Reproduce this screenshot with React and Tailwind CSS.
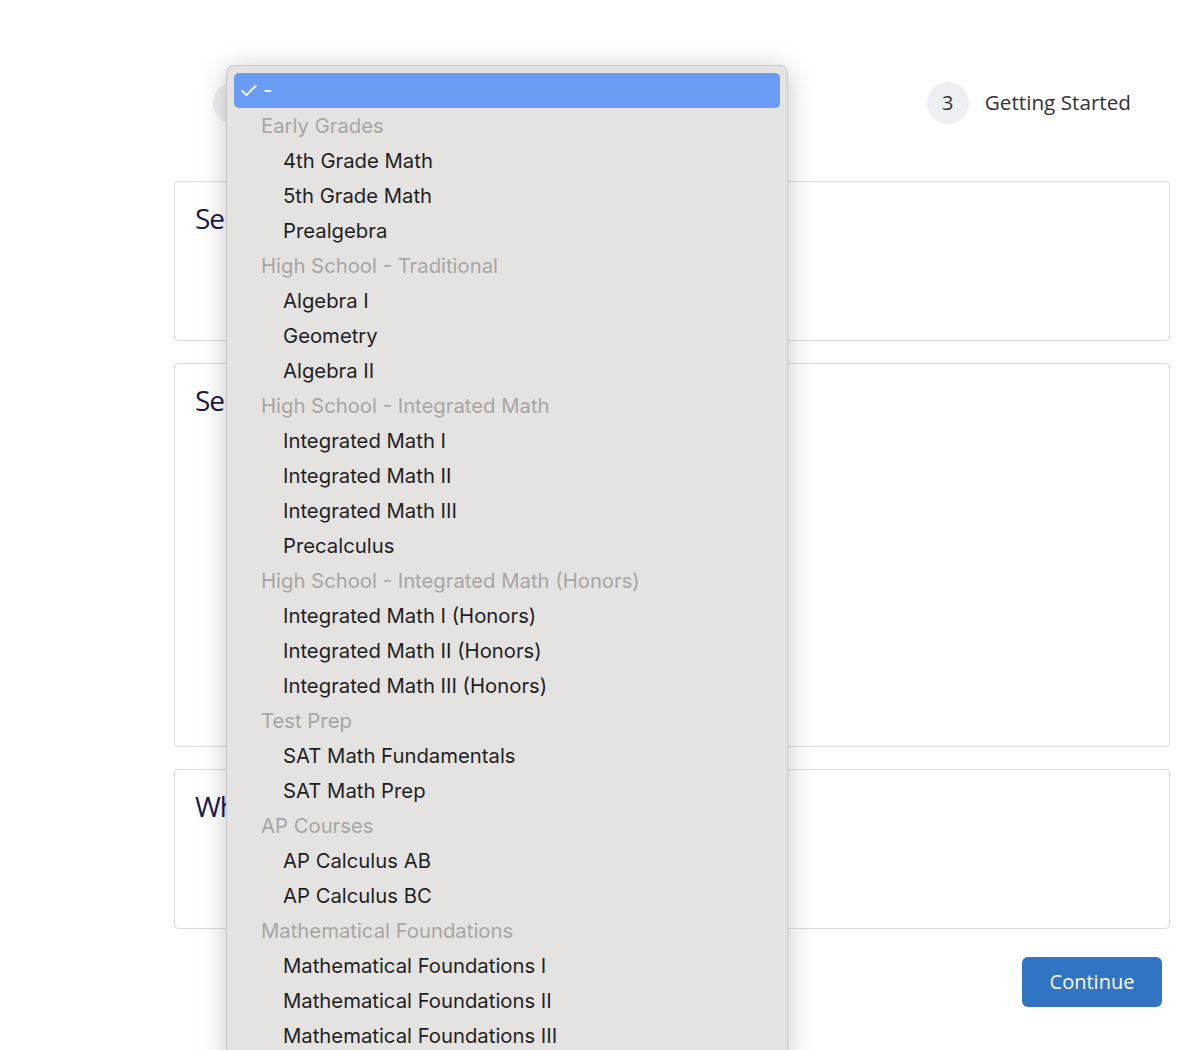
import { Check } from "lucide-react";

const groups = [
  { label: "Early Grades", items: ["4th Grade Math", "5th Grade Math", "Prealgebra"] },
  { label: "High School - Traditional", items: ["Algebra I", "Geometry", "Algebra II"] },
  {
    label: "High School - Integrated Math",
    items: ["Integrated Math I", "Integrated Math II", "Integrated Math III", "Precalculus"],
  },
  {
    label: "High School - Integrated Math (Honors)",
    items: ["Integrated Math I (Honors)", "Integrated Math II (Honors)", "Integrated Math III (Honors)"],
  },
  { label: "Test Prep", items: ["SAT Math Fundamentals", "SAT Math Prep"] },
  { label: "AP Courses", items: ["AP Calculus AB", "AP Calculus BC"] },
  {
    label: "Mathematical Foundations",
    items: ["Mathematical Foundations I", "Mathematical Foundations II", "Mathematical Foundations III"],
  },
];

const steps = [
  { n: 1, label: "Your Account" },
  { n: 2, label: "Your Profile" },
  { n: 3, label: "Getting Started" },
];

function Step({ n, label }) {
  return (
    <div className="flex items-center gap-4">
      <div className="w-[42px] h-[42px] rounded-full bg-[#eeeff2] flex items-center justify-center text-[20px] text-[#333]">
        {n}
      </div>
      <span className="text-[20.7px] text-[#333]">{label}</span>
    </div>
  );
}

function Card({ title, height }) {
  return (
    <div className={`border border-[#dcdcdc] rounded-[4px] px-[20px] pt-[16px] ${height}`}>
      <h2 className="text-[28px] text-[#1b1a4d] leading-[40px] tracking-[-1px]">{title}</h2>
    </div>
  );
}

function SelectMenu() {
  return (
    <div className="absolute left-[226px] top-[65px] w-[562px] h-[1000px] bg-[#e4e3e2] border border-[#c9c8c7] rounded-[8px] shadow-[0_4px_28px_rgba(0,0,0,0.22)] p-[7px] font-['Inter',sans-serif] text-[20.3px]">
      <div className="h-[35px] rounded-[5px] bg-[#6a9cf6] text-white flex items-center pl-[5px] gap-[4px]">
        <Check size={20} strokeWidth={2.4} />
        <span>-</span>
      </div>
      <div className="pt-[1px]">
        {groups.map((g) => (
          <div key={g.label}>
            <div className="h-[35px] flex items-center pl-[27px] text-[#a6a6a6]">{g.label}</div>
            {g.items.map((it) => (
              <div key={it} className="h-[35px] flex items-center pl-[49px] text-[#1f1f1f]">
                {it}
              </div>
            ))}
          </div>
        ))}
      </div>
    </div>
  );
}

export default function App() {
  return (
    <div className="relative w-[1200px] h-[1050px] overflow-hidden bg-white font-['Open_Sans',sans-serif]">
      <div className="ml-[174px] w-[996px] pt-[82px]">
        <div className="flex justify-between pl-[39px] pr-[39px]">
          {steps.map((s) => (
            <Step key={s.n} {...s} />
          ))}
        </div>
        <div className="mt-[57px] flex flex-col gap-[22px]">
          <Card title="Select your grade level" height="h-[160px]" />
          <Card title="Select your course" height="h-[384px]" />
          <Card title="What is your goal?" height="h-[160px]" />
        </div>
        <div className="flex justify-end pr-[8px] mt-[28px]">
          <button className="w-[140px] h-[50px] rounded-[6px] bg-[#3174c4] text-white text-[20px]">
            Continue
          </button>
        </div>
      </div>
      <SelectMenu />
    </div>
  );
}
